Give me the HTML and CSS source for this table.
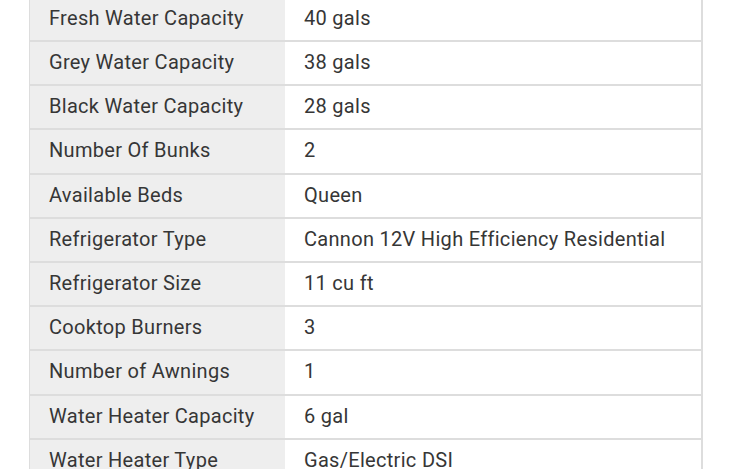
FILE: index.html
```html
<!DOCTYPE html>
<html>
<head>
<meta charset="utf-8">
<link rel="stylesheet" href="styles.css">
</head>
<body>
<div class="specs">
  <div class="row"><div class="label">Fresh Water Capacity</div><div class="value">40 gals</div></div>
  <div class="row"><div class="label">Grey Water Capacity</div><div class="value">38 gals</div></div>
  <div class="row"><div class="label">Black Water Capacity</div><div class="value">28 gals</div></div>
  <div class="row"><div class="label">Number Of Bunks</div><div class="value">2</div></div>
  <div class="row"><div class="label">Available Beds</div><div class="value">Queen</div></div>
  <div class="row"><div class="label">Refrigerator Type</div><div class="value">Cannon 12V High Efficiency Residential</div></div>
  <div class="row"><div class="label">Refrigerator Size</div><div class="value">11 cu ft</div></div>
  <div class="row"><div class="label">Cooktop Burners</div><div class="value">3</div></div>
  <div class="row"><div class="label">Number of Awnings</div><div class="value">1</div></div>
  <div class="row"><div class="label">Water Heater Capacity</div><div class="value">6 gal</div></div>
  <div class="row"><div class="label">Water Heater Type</div><div class="value">Gas/Electric DSI</div></div>
</div>
</body>
</html>
```
FILE: styles.css
```css
html, body {
  margin: 0;
  padding: 0;
  background: #ffffff;
  overflow: hidden;
}
body {
  font-family: Roboto, "Liberation Sans", sans-serif;
  font-size: 20px;
  letter-spacing: 0.3px;
  color: #363636;
}
.specs {
  margin: -2.2px 0 0 29px;
  width: 671px;
  border-left: 1px solid #dddddd;
  border-right: 2px solid #dddddd;
}
.row {
  display: grid;
  grid-template-columns: 255px 1fr;
  height: 42.2px;
  border-bottom: 2px solid #dddddd;
}
.label {
  background: #eeeeee;
  padding: 0 0 2px 19px;
  display: flex;
  align-items: center;
}
.value {
  background: #ffffff;
  padding: 0 0 2px 19px;
  display: flex;
  align-items: center;
}
```
